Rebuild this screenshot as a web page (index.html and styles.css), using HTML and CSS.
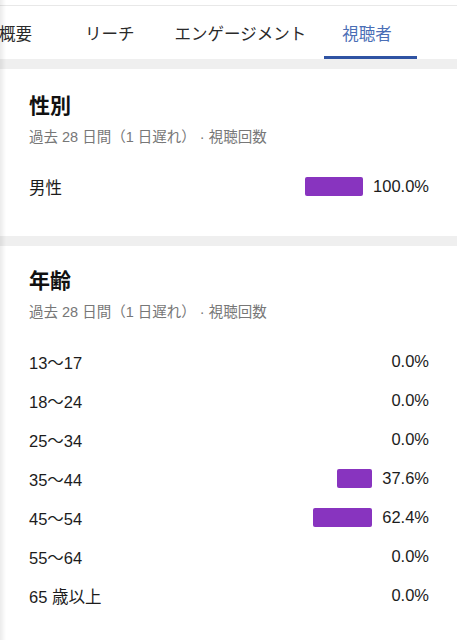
FILE: index.html
```html
<!DOCTYPE html>
<html lang="ja">
<head>
<meta charset="utf-8">
<title>視聴者</title>
<link rel="stylesheet" href="styles.css">
</head>
<body>
<div class="page">
  <div class="topline"></div>
  <nav class="tabs">
    <div class="tab tab--first">概要</div>
    <div class="tab">リーチ</div>
    <div class="tab">エンゲージメント</div>
    <div class="tab tab--active">視聴者</div>
  </nav>
  <div class="divider"></div>
  <section class="card card--gender">
    <h2 class="card-title">性別</h2>
    <p class="card-sub">過去 28 日間（1 日遅れ） · 視聴回数</p>
    <div class="rows">
      <div class="row"><span class="label">男性</span><span class="bar" style="width:58px"></span><span class="pct">100.0%</span></div>
    </div>
  </section>
  <div class="divider divider--mid"></div>
  <section class="card card--age">
    <h2 class="card-title">年齢</h2>
    <p class="card-sub">過去 28 日間（1 日遅れ） · 視聴回数</p>
    <div class="rows">
      <div class="row"><span class="label">13〜17</span><span class="pct">0.0%</span></div>
      <div class="row"><span class="label">18〜24</span><span class="pct">0.0%</span></div>
      <div class="row"><span class="label">25〜34</span><span class="pct">0.0%</span></div>
      <div class="row"><span class="label">35〜44</span><span class="bar" style="width:35px"></span><span class="pct">37.6%</span></div>
      <div class="row"><span class="label">45〜54</span><span class="bar" style="width:59px"></span><span class="pct">62.4%</span></div>
      <div class="row"><span class="label">55〜64</span><span class="pct">0.0%</span></div>
      <div class="row"><span class="label">65 歳以上</span><span class="pct">0.0%</span></div>
    </div>
  </section>
</div>
<div class="edge-shade"></div>
</body>
</html>
```
FILE: styles.css
```css
* { box-sizing: border-box; }
html, body { margin: 0; padding: 0; }
body {
  background: #ffffff;
  font-family: "Liberation Sans", "Noto Sans CJK JP", sans-serif;
  color: #1c1c1c;
  overflow: hidden;
  text-spacing-trim: space-all;
}
.page {
  width: 457px;
  min-height: 640px;
}
.topline {
  height: 6px;
  border-bottom: 1px solid #e8e8e8;
}
.tabs {
  display: flex;
  align-items: stretch;
  height: 53px;
  margin-left: -21px;
  white-space: nowrap;
}
.tab {
  display: flex;
  align-items: center;
  padding: 0 20px;
  font-size: 16.5px;
  color: #2a2a2a;
  border-bottom: 3px solid transparent;
  padding-top: 3px;
}
.tab--first { padding-right: 33px; }
.tab--active {
  color: #4a6eb6;
  border-bottom-color: #2f53a3;
  padding-left: 18px;
  padding-right: 25px;
  margin-left: -2px;
}
.divider {
  height: 10px;
  background: #efefef;
}
.card {
  padding: 23px 28px 30px 29px;
}
.card--age { padding-top: 21px; }
.card-title {
  margin: 0;
  font-size: 21px;
  line-height: 28px;
  font-weight: bold;
  color: #111;
}
.card-sub {
  margin: 7px 0 0;
  font-size: 14.5px;
  line-height: 20px;
  color: #777;
}
.rows {
  margin-top: 20px;
  display: flex;
  flex-direction: column;
}
.row {
  display: flex;
  align-items: center;
  height: 39px;
  font-size: 16.5px;
  color: #1c1c1c;
}
.label { flex: 1; }
.bar {
  height: 19px;
  background: #8834bf;
  border-radius: 2px;
  margin-right: 10px;
}
.pct { text-align: right; }
.edge-shade {
  position: fixed;
  top: 0;
  left: 0;
  bottom: 0;
  width: 6px;
  background: linear-gradient(to right, rgba(0,0,0,0.08), rgba(0,0,0,0));
  pointer-events: none;
}
```
